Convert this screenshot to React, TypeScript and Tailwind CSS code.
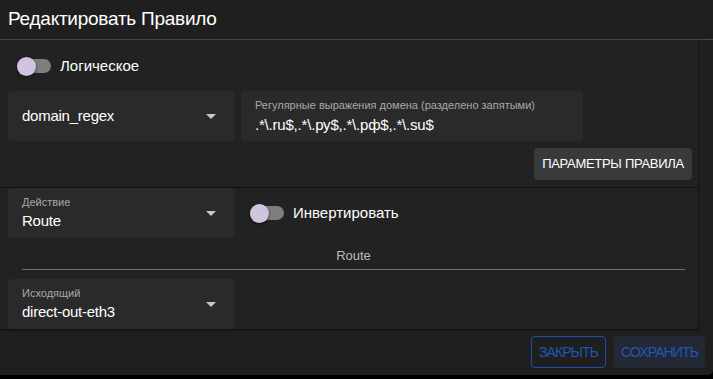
import React from "react";

function Caret() {
  return (
    <svg width="10" height="5" viewBox="0 0 10 5" className="shrink-0">
      <path d="M0 0 L10 0 L5 5 Z" fill="#c8c8c8" />
    </svg>
  );
}

function Switch({ label }: { label: string }) {
  return (
    <div className="flex items-center">
      <div className="relative w-[34px] h-[19px] flex items-center">
        <div className="w-[34px] h-[14px] rounded-full bg-[#7e7e7e]" />
        <div className="absolute left-0 top-0 w-[19px] h-[19px] rounded-full bg-[#d1c4e0] shadow-[0_1px_3px_rgba(0,0,0,0.6)]" />
      </div>
      <span className="ml-[9px] text-[15px] text-white">{label}</span>
    </div>
  );
}

function SelectField({ label, value }: { label?: string; value: string }) {
  return (
    <div className="w-[226px] h-[50px] rounded-[4px] bg-[#2a2a2a] flex items-center pl-[14px] pr-[18px] shrink-0">
      <div className="flex-1 flex flex-col justify-center">
        {label && <div className="text-[11px] leading-[13px] text-[#a9a9a9] mb-[3px]">{label}</div>}
        <div className="text-[15px] leading-[18px] text-white tracking-[-0.25px]">{value}</div>
      </div>
      <Caret />
    </div>
  );
}

export default function App() {
  return (
    <div className="w-[713px] h-[379px] bg-black overflow-hidden" style={{ fontFamily: "'Liberation Sans', Arial, sans-serif" }}>
      <div className="h-[375px] bg-[#1f1f1f] rounded-br-[5px] flex flex-col">
        <div className="h-[40px] px-2 flex items-center text-[19px] tracking-[-0.25px] text-white border-b border-[#4a4a4a]">
          Редактировать Правило
        </div>
        <div className="w-[698px] h-[147px] bg-[#222222] shadow-[0_1px_3px_rgba(0,0,0,0.6)] rounded-br-[4px] flex flex-col px-2">
          <div className="h-[51px] flex items-center pl-[9px] pt-[1px]">
            <Switch label="Логическое" />
          </div>
          <div className="flex gap-[7px]">
            <SelectField value="domain_regex" />
            <div className="w-[342px] h-[50px] rounded-[4px] bg-[#2a2a2a] flex flex-col justify-center pl-[14px]">
              <div className="text-[11px] leading-[13px] text-[#a9a9a9] mb-[4px]">Регулярные выражения домена (разделено запятыми)</div>
              <div className="text-[15px] leading-[18px] text-white tracking-[-0.2px]">.*\.ru$,.*\.ру$,.*\.рф$,.*\.su$</div>
            </div>
          </div>
          <div className="flex justify-end mt-[7px]">
            <button className="h-[32px] w-[158px] rounded-[4px] bg-[#3a3a3a] text-white text-[13px] tracking-[-0.3px] mr-[-2px]">
              ПАРАМЕТРЫ ПРАВИЛА
            </button>
          </div>
        </div>
        <div className="w-[698px] h-[141px] mt-[1px] bg-[#222222] shadow-[0_1px_3px_rgba(0,0,0,0.6)] rounded-br-[4px] flex flex-col px-2">
          <div className="flex items-center">
            <SelectField label="Действие" value="Route" />
            <div className="ml-[16px]">
              <Switch label="Инвертировать" />
            </div>
          </div>
          <div className="ml-[14px] mr-[5px]">
            <div className="h-[31px] flex items-center justify-center text-[13px] text-[#bdbdbd] pt-[4px]">Route</div>
            <div className="h-px bg-[#6e6e6e]" />
          </div>
          <div className="mt-[9px]">
            <SelectField label="Исходящий" value="direct-out-eth3" />
          </div>
        </div>
        <div className="flex justify-end gap-[8px] mt-[7px] pr-[8px]">
          <button className="h-[32px] w-[75px] rounded-[4px] border border-[#1d4fae] text-[#2255b5] text-[14px] tracking-[-0.9px]">
            ЗАКРЫТЬ
          </button>
          <button className="h-[32px] w-[91px] rounded-[4px] bg-[#222934] text-[#2255b5] text-[14px] tracking-[-0.9px]">
            СОХРАНИТЬ
          </button>
        </div>
      </div>
    </div>
  );
}
